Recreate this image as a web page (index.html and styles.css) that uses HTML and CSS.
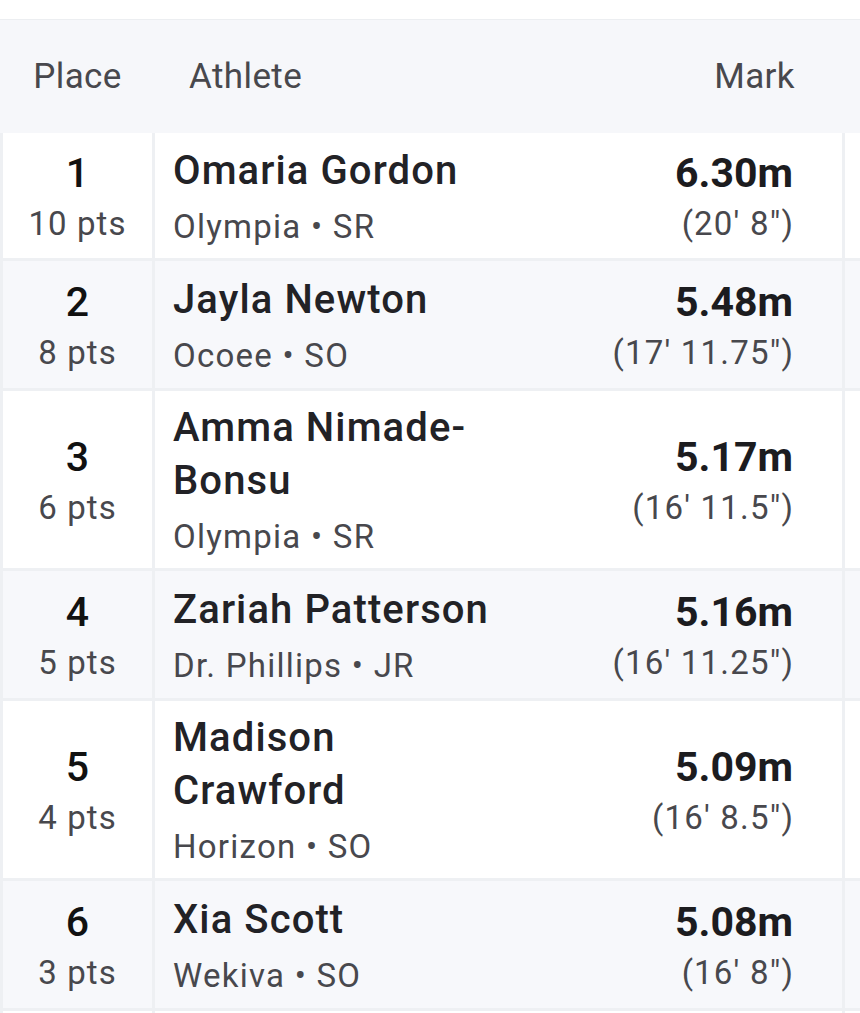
FILE: index.html
```html
<!DOCTYPE html>
<html>
<head>
<meta charset="utf-8">
<link rel="stylesheet" href="styles.css">
</head>
<body>
<div class="page">
  <div class="head">
    <div class="h-place">Place</div>
    <div class="h-athlete">Athlete</div>
    <div class="h-mark">Mark</div>
  </div>
  <div class="grid">
    <div class="place first"><div class="num">1</div><div class="pts">10 pts</div></div>
    <div class="athlete"><div class="info"><div class="name">Omaria Gordon</div><div class="sub">Olympia • SR</div></div><div class="mark"><div class="m">6.30m</div><div class="ft">(20' 8")</div></div></div>
    <div class="extra"></div>

    <div class="place alt"><div class="num">2</div><div class="pts">8 pts</div></div>
    <div class="athlete alt"><div class="info"><div class="name">Jayla Newton</div><div class="sub">Ocoee • SO</div></div><div class="mark"><div class="m">5.48m</div><div class="ft">(17' 11.75")</div></div></div>
    <div class="extra alt"></div>

    <div class="place"><div class="num">3</div><div class="pts">6 pts</div></div>
    <div class="athlete"><div class="info"><div class="name">Amma Nimade-<br>Bonsu</div><div class="sub">Olympia • SR</div></div><div class="mark"><div class="m">5.17m</div><div class="ft">(16' 11.5")</div></div></div>
    <div class="extra"></div>

    <div class="place alt"><div class="num">4</div><div class="pts">5 pts</div></div>
    <div class="athlete alt"><div class="info"><div class="name">Zariah Patterson</div><div class="sub">Dr. Phillips • JR</div></div><div class="mark"><div class="m">5.16m</div><div class="ft">(16' 11.25")</div></div></div>
    <div class="extra alt"></div>

    <div class="place"><div class="num">5</div><div class="pts">4 pts</div></div>
    <div class="athlete"><div class="info"><div class="name">Madison<br>Crawford</div><div class="sub">Horizon • SO</div></div><div class="mark"><div class="m">5.09m</div><div class="ft">(16' 8.5")</div></div></div>
    <div class="extra"></div>

    <div class="place alt"><div class="num">6</div><div class="pts">3 pts</div></div>
    <div class="athlete alt"><div class="info"><div class="name">Xia Scott</div><div class="sub">Wekiva • SO</div></div><div class="mark"><div class="m">5.08m</div><div class="ft">(16' 8")</div></div></div>
    <div class="extra alt"></div>

    <div class="place"></div>
    <div class="athlete"></div>
    <div class="extra"></div>
  </div>
</div>
</body>
</html>
```

FILE: styles.css
```css
html, body {
  margin: 0;
  padding: 0;
  background: #ffffff;
  overflow: hidden;
}
body {
  font-family: Roboto, "Noto Sans", "Liberation Sans", sans-serif;
  width: 860px;
  height: 1013px;
}
.page {
  padding-top: 19px;
  width: 1100px;
}
.head {
  display: grid;
  grid-template-columns: 152px 640px 1fr;
  align-items: center;
  height: 113px;
  border-top: 1px solid #eceef1;
  background: #f6f7fa;
  color: #48484d;
  font-size: 35px;
  letter-spacing: 0.4px;
}
.h-place {
  grid-column: 1 / 2;
  grid-row: 1;
  text-align: center;
  padding-left: 3px;
}
.h-athlete {
  grid-column: 2 / 3;
  grid-row: 1;
  padding-left: 37px;
}
.h-mark {
  grid-column: 2 / 3;
  grid-row: 1;
  justify-self: end;
  margin-right: -3px;
}
.grid {
  display: grid;
  grid-template-columns: 149px 687px 1fr;
  gap: 3px;
  padding: 0 0 0 3px;
  background: #eef0f3;
}
.grid > div {
  background: #ffffff;
}
.grid > div.alt {
  background: #f7f8fb;
}
.place {
  box-sizing: border-box;
  min-height: 127px;
  padding-top: 6px;
  display: flex;
  flex-direction: column;
  align-items: center;
  justify-content: center;
}
.place.first {
  min-height: 125px;
}
.num {
  font-size: 41px;
  line-height: 49px;
  font-weight: 500;
  color: #111111;
}
.pts {
  font-size: 33px;
  line-height: 51px;
  color: #48484d;
  letter-spacing: 1.1px;
}
.athlete {
  display: flex;
  justify-content: space-between;
  align-items: center;
  padding: 10px 49px 1px 18px;
}
.name {
  font-size: 40px;
  line-height: 53px;
  font-weight: 500;
  color: #222226;
  letter-spacing: 1.1px;
}
.sub {
  font-size: 33px;
  line-height: 60px;
  color: #48484d;
  letter-spacing: 1.25px;
}
.mark {
  text-align: right;
  padding-bottom: 2px;
}
.m {
  font-size: 41px;
  line-height: 49px;
  font-weight: 700;
  color: #1c1c1f;
}
.ft {
  font-size: 33px;
  line-height: 51px;
  color: #48484d;
  letter-spacing: 1.2px;
  margin-right: -1.2px;
}
```
